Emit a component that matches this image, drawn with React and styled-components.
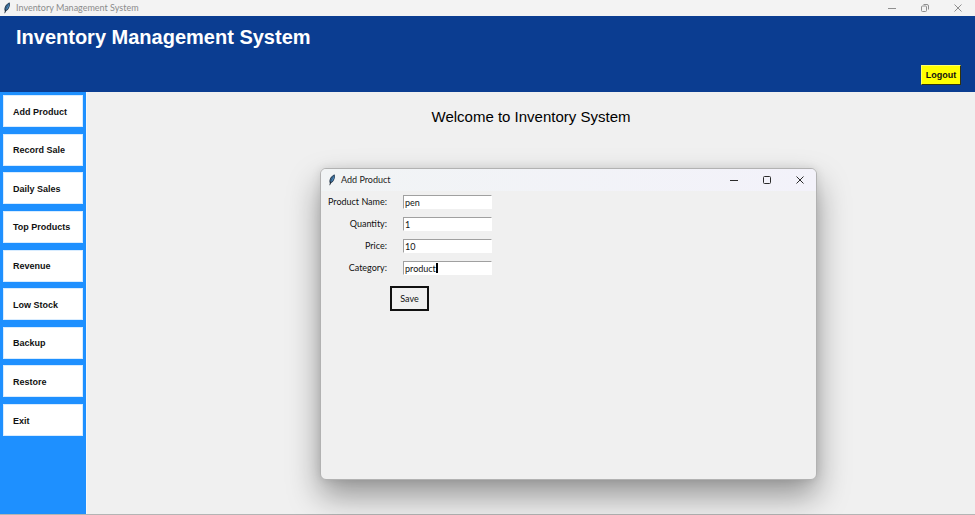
import React from "react";
import styled, { createGlobalStyle } from "styled-components";

const GlobalStyle = createGlobalStyle`
  *, *::before, *::after { box-sizing: border-box; }
  html, body { margin: 0; padding: 0; }
  body { font-family: Lato, "Open Sans", sans-serif; background: #f0f0f0; overflow: hidden; }
  button, input { font: inherit; color: inherit; }
`;

const AppWindow = styled.div`
  display: flex;
  flex-direction: column;
  min-height: 100vh;
  background: #f0f0f0;
  border-bottom: 1px solid #b4b4b4;
`;

const TitleBar = styled.div`
  display: flex;
  align-items: center;
  height: ${(p) => (p.$dialog ? 22 : 16)}px;
  padding: ${(p) => (p.$dialog ? "0 0 0 7px" : "0 1px 0 3px")};
  color: ${(p) => (p.$dialog ? "#1c1c1c" : "#8c8c8c")};
  background: ${(p) => (p.$dialog ? "linear-gradient(90deg, #f1f4f5, #f3f2fa)" : "#f3f3f3")};
  border-radius: ${(p) => (p.$dialog ? "5px 5px 0 0" : "0")};
`;

const TitleText = styled.span`
  flex: 1;
  margin-left: 5px;
  font-size: 9px;
  line-height: 12px;
`;

const WindowButton = styled.button`
  display: grid;
  place-items: center;
  width: 33px;
  height: 100%;
  padding: 0;
  border: 0;
  background: transparent;
`;

const Header = styled.header`
  display: flex;
  flex-direction: column;
  justify-content: space-between;
  height: 76px;
  padding: 9px 14px 7px 16px;
  background: #0b3d91;
`;

const Heading = styled.h1`
  margin: 0;
  font: bold 20px/24px "Liberation Sans", Arial, sans-serif;
  color: #fff;
`;

const LogoutButton = styled.button`
  align-self: flex-end;
  width: 40px;
  height: 20px;
  padding: 0;
  border: 1px solid;
  border-color: #ffff66 #33330a #33330a #ffff66;
  background: #ff0;
  color: #111;
  font: bold 9px/16px "Liberation Sans", Arial, sans-serif;
  white-space: nowrap;
`;

const Body = styled.div`
  flex: 1;
  display: flex;
`;

const Sidebar = styled.nav`
  width: 87px;
  padding: 3px;
  background: #1e90ff;
  border-right: 1px solid #f6f8fa;
`;

const MenuList = styled.div`
  display: flex;
  flex-direction: column;
  justify-content: space-between;
  height: 341px;
`;

const MenuButton = styled.button`
  height: 32px;
  padding: 1px 9px 0;
  border: 1px solid #d8ecff;
  background: #fff;
  color: #111;
  font: bold 9px/12px "Liberation Sans", Arial, sans-serif;
  text-align: left;
  white-space: nowrap;
`;

const Main = styled.main`
  position: relative;
  flex: 1;
`;

const Welcome = styled.h2`
  margin: 0;
  padding-top: 16px;
  font: normal 15px/18px "Liberation Sans", Arial, sans-serif;
  color: #000;
  text-align: center;
`;

const Dialog = styled.section`
  position: absolute;
  top: 76px;
  left: 233px;
  width: 497px;
  height: 312px;
  border: 1px solid #b2b2b2;
  border-radius: 6px;
  background: #f0f0f0;
  box-shadow: 0 16px 32px rgba(0, 0, 0, 0.38), 0 0 10px rgba(0, 0, 0, 0.1);
`;

const Form = styled.form`
  display: grid;
  grid-template-columns: 66px 89px;
  column-gap: 16px;
  row-gap: 8px;
  padding-top: 4px;
  font-size: 9px;
  line-height: 14px;
  color: #111;
`;

const Label = styled.label`
  text-align: right;
  white-space: nowrap;
`;

const Field = styled.div`
  position: relative;
  height: 14px;
`;

const Input = styled.input`
  display: block;
  width: 100%;
  height: 14px;
  padding: 0 1px;
  border: 1px solid;
  border-color: #a0a0a0 #fff #fff #a0a0a0;
  border-radius: 0;
  outline: 0;
  background: #fff;
  line-height: 12px;
`;

const Caret = styled.span`
  position: absolute;
  top: 2px;
  left: 33px;
  width: 2px;
  height: 10px;
  background: #000;
`;

const Actions = styled.div`
  grid-column: 1 / -1;
  padding: 3px 0 0 69px;
`;

const SaveButton = styled.button`
  display: block;
  width: 39px;
  height: 25px;
  padding: 0;
  border: 2px solid #111;
  background: #f0f0f0;
`;

const Feather = () => (
  <svg width="8" height="12" viewBox="0 0 8 12" aria-hidden="true">
    <path d="M6.7.5C4 1.2 1.4 4.2 1.4 7.8L2 9.6 1.6 11.6 3 9.3C5.8 7.8 7.7 3.5 6.7.5Z" fill="#24384c" />
    <path d="M6.3 1.2C4.300 2.300 2.600 4.500 2.300 7.500L3.200 8C5.200 6.400 6.700 3.600 6.300 1.200Z" fill="#4f91c9" />
    <path d="M5.600 2.400C3.700 4.700 2.500 7.500 1.700 11.200" fill="none" stroke="#101820" strokeWidth=".5" />
  </svg>
);

const glyphs = {
  Minimize: <path d="M1 5.500h8" />,
  Maximize: <rect x="1.500" y="1.500" width="7" height="7" rx="1" />,
  Restore: (
    <>
      <rect x="1.500" y="3" width="5" height="5.500" rx="1" />
      <path d="M3.500 1.500H7q1.500 0 1.500 1.500v3.500" />
    </>
  ),
  Close: <path d="M1.500 1.500l7 7M8.500 1.500l-7 7" />,
};

const Controls = ({ dialog }) =>
  ["Minimize", dialog ? "Maximize" : "Restore", "Close"].map((name) => (
    <WindowButton key={name} type="button" aria-label={name}>
      <svg width="10" height="10" viewBox="0 0 10 10" fill="none" stroke={dialog ? "#2b2b2b" : "#8f8f8f"} strokeWidth="1">
        {glyphs[name]}
      </svg>
    </WindowButton>
  ));

const menu = ["Add Product", "Record Sale", "Daily Sales", "Top Products", "Revenue", "Low Stock", "Backup", "Restore", "Exit"];

const fields = [
  { id: "name", label: "Product Name:", value: "pen" },
  { id: "quantity", label: "Quantity:", value: "1" },
  { id: "price", label: "Price:", value: "10" },
  { id: "category", label: "Category:", value: "product", active: true },
];

export default function App() {
  return (
    <AppWindow>
      <GlobalStyle />
      <TitleBar>
        <Feather />
        <TitleText>Inventory Management System</TitleText>
        <Controls />
      </TitleBar>
      <Header>
        <Heading>Inventory Management System</Heading>
        <LogoutButton type="button">Logout</LogoutButton>
      </Header>
      <Body>
        <Sidebar>
          <MenuList>
            {menu.map((item) => (
              <MenuButton key={item} type="button">{item}</MenuButton>
            ))}
          </MenuList>
        </Sidebar>
        <Main>
          <Welcome>Welcome to Inventory System</Welcome>
          <Dialog role="dialog" aria-label="Add Product">
            <TitleBar $dialog>
              <Feather />
              <TitleText>Add Product</TitleText>
              <Controls dialog />
            </TitleBar>
            <Form onSubmit={(e) => e.preventDefault()}>
              {fields.map((f) => (
                <React.Fragment key={f.id}>
                  <Label htmlFor={f.id}>{f.label}</Label>
                  <Field>
                    <Input id={f.id} type="text" defaultValue={f.value} />
                    {f.active && <Caret />}
                  </Field>
                </React.Fragment>
              ))}
              <Actions>
                <SaveButton type="submit">Save</SaveButton>
              </Actions>
            </Form>
          </Dialog>
        </Main>
      </Body>
    </AppWindow>
  );
}
